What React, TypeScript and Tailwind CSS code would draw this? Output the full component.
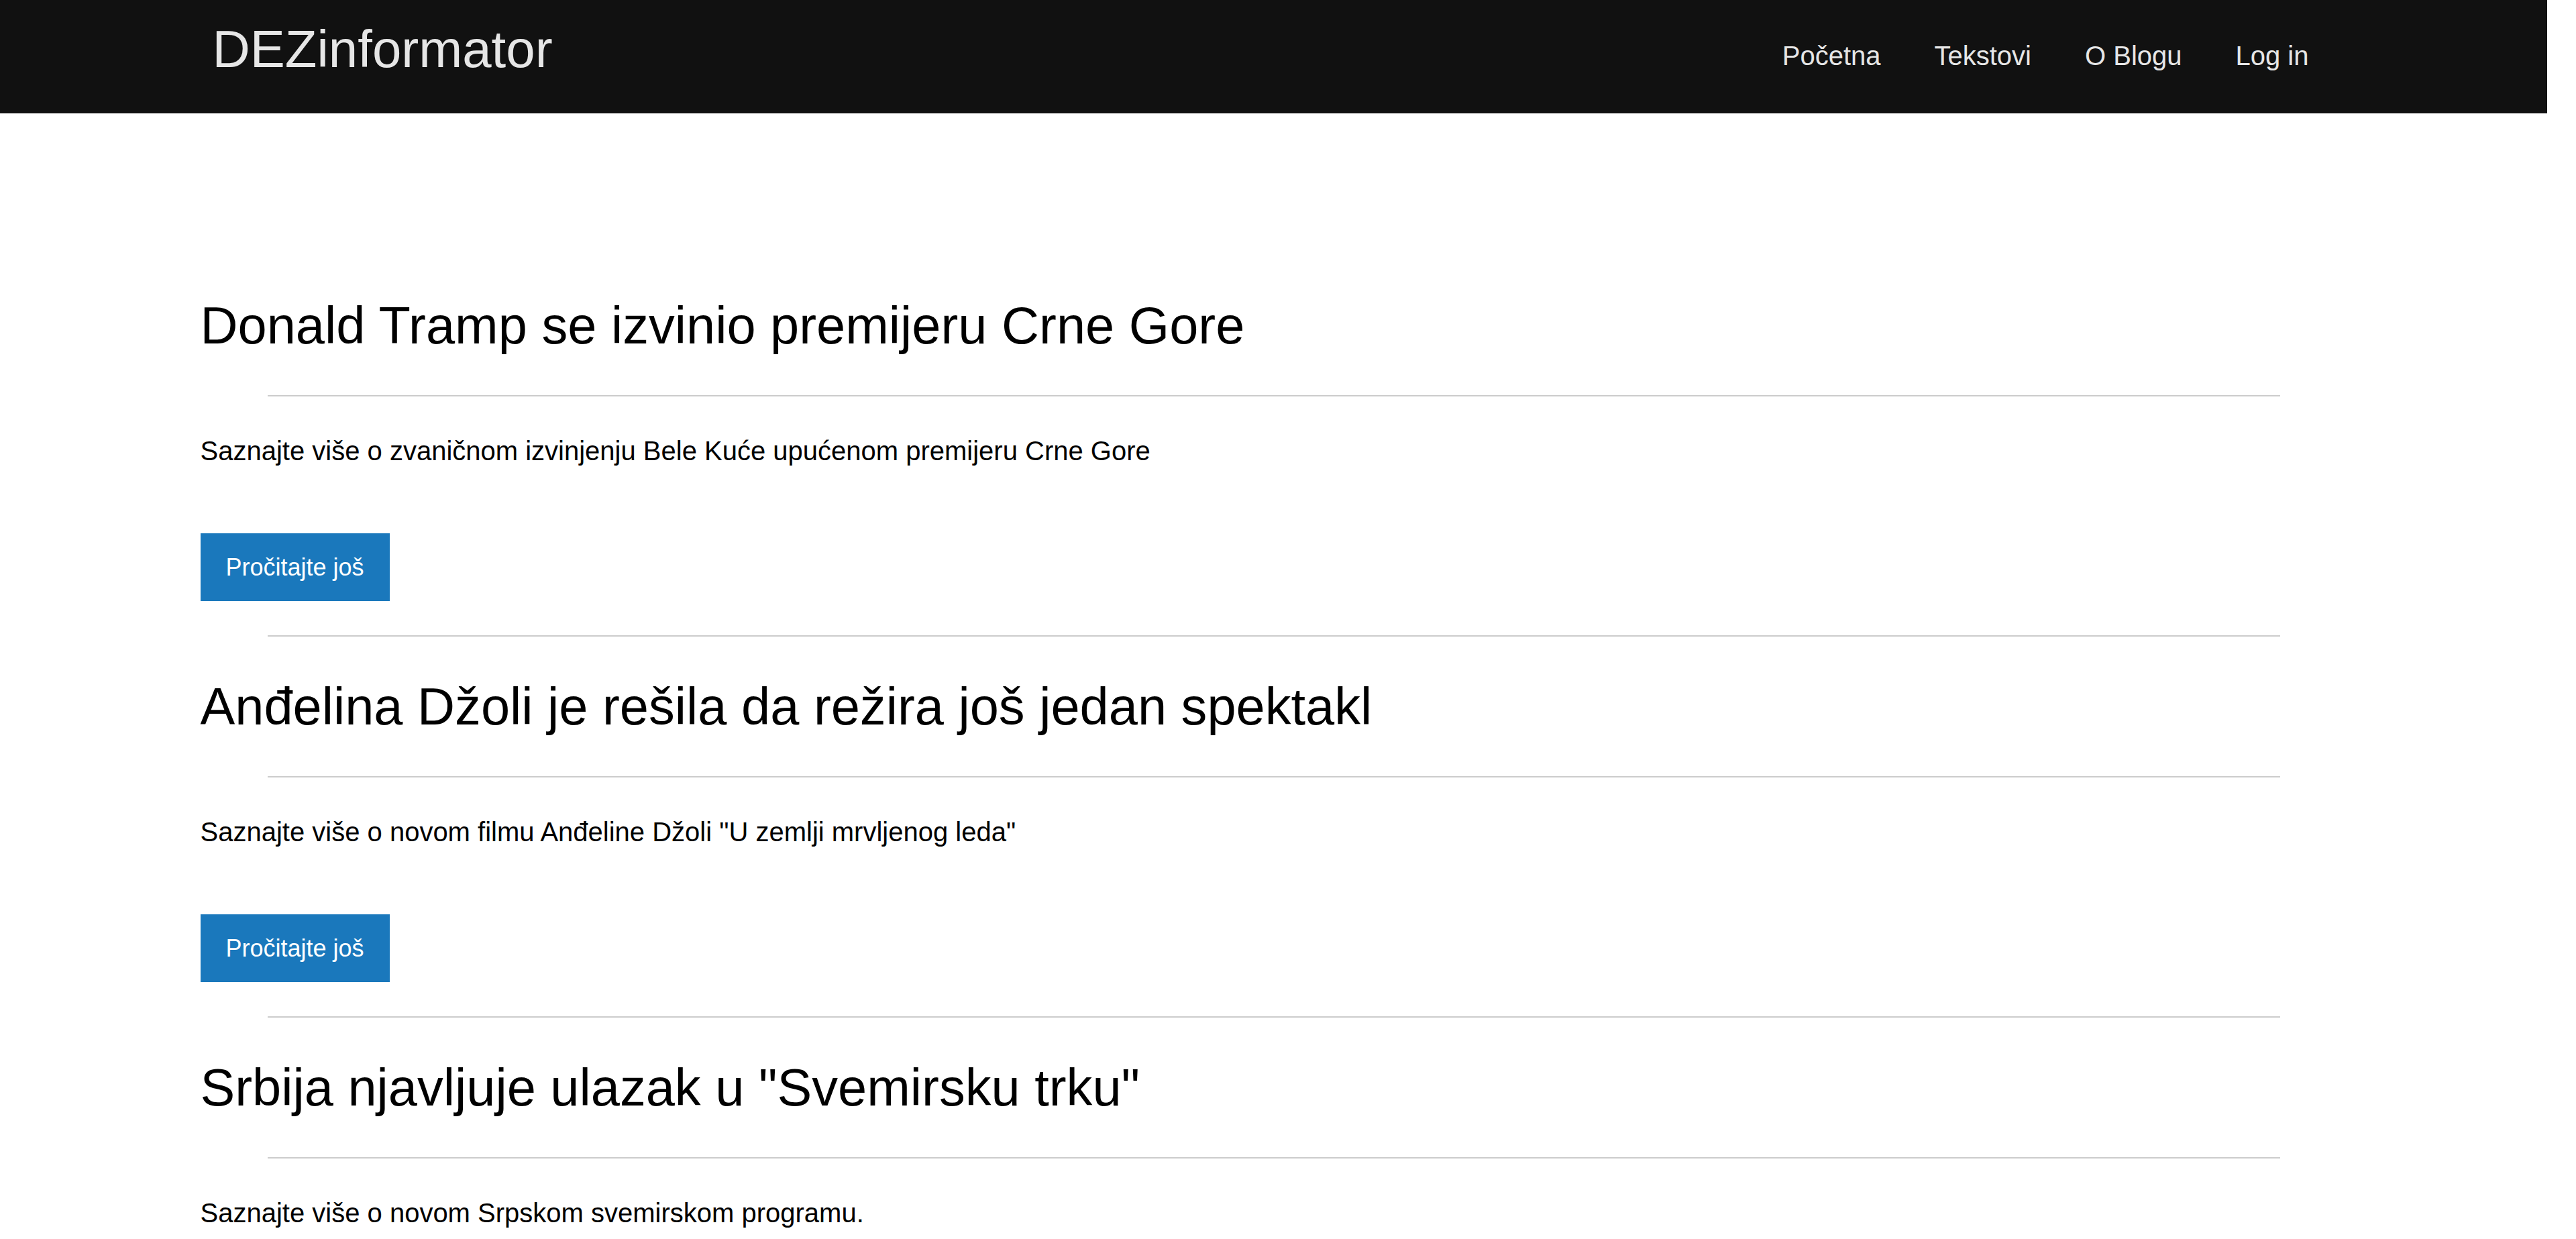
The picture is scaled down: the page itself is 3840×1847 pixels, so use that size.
const articles = [
  {
    id: 1,
    title: "Donald Tramp se izvinio premijeru Crne Gore",
    summary:
      "Saznajte više o zvaničnom izvinjenju Bele Kuće upućenom premijeru Crne Gore",
  },
  {
    id: 2,
    title: "Anđelina Džoli je rešila da režira još jedan spektakl",
    summary: 'Saznajte više o novom filmu Anđeline Džoli "U zemlji mrvljenog leda"',
  },
  {
    id: 3,
    title: 'Srbija njavljuje ulazak u "Svemirsku trku"',
    summary: "Saznajte više o novom Srpskom svemirskom programu.",
  },
];

const navLinks = ["Početna", "Tekstovi", "O Blogu", "Log in"];

const Navbar = () => {
  return (
    <header className="h-[169px] bg-[#111111]">
      <div className="mx-auto flex w-[3200px] items-start justify-between px-[17px]">
        <a href="#" className="mt-[27px] ml-[1px] text-[78px] leading-[92px] text-[#e6e6e6]">
          DEZinformator
        </a>
        <nav className="mt-[53px] flex">
          {navLinks.map((link) => (
            <a
              key={link}
              href="#"
              className="px-[40px] text-[40px] leading-[60px] text-[#e6e6e6]"
            >
              {link}
            </a>
          ))}
        </nav>
      </div>
    </header>
  );
};

const Divider = ({ className }: { className: string }) => (
  <div className={`mx-[100px] h-[2px] bg-[#cccccc] ${className}`} />
);

const ArticlePreview = ({
  title,
  summary,
  first,
}: {
  title: string;
  summary: string;
  first: boolean;
}) => {
  return (
    <article className={first ? "" : "mt-[58px]"}>
      <h1 className="text-[77.6px] leading-[92px] text-black">{title}</h1>
      <Divider className="mt-[58px]" />
      <p className="mt-[51px] text-[40px] leading-[60px] text-black">{summary}</p>
      <button className="mt-[93px] flex h-[101px] items-center bg-[#1a78bc] px-[38px] text-[36px] leading-[40px] text-white">
        Pročitajte još
      </button>
      <Divider className="mt-[51px]" />
    </article>
  );
};

const App = () => {
  return (
    <div className="min-h-screen w-[3797px] bg-white font-['Liberation_Sans',Arial,sans-serif]">
      <Navbar />
      <main className="mx-auto w-[3200px] pt-[270px] pb-[200px]">
        {articles.map((article, i) => (
          <ArticlePreview
            key={article.id}
            title={article.title}
            summary={article.summary}
            first={i === 0}
          />
        ))}
      </main>
    </div>
  );
};

export default App;
